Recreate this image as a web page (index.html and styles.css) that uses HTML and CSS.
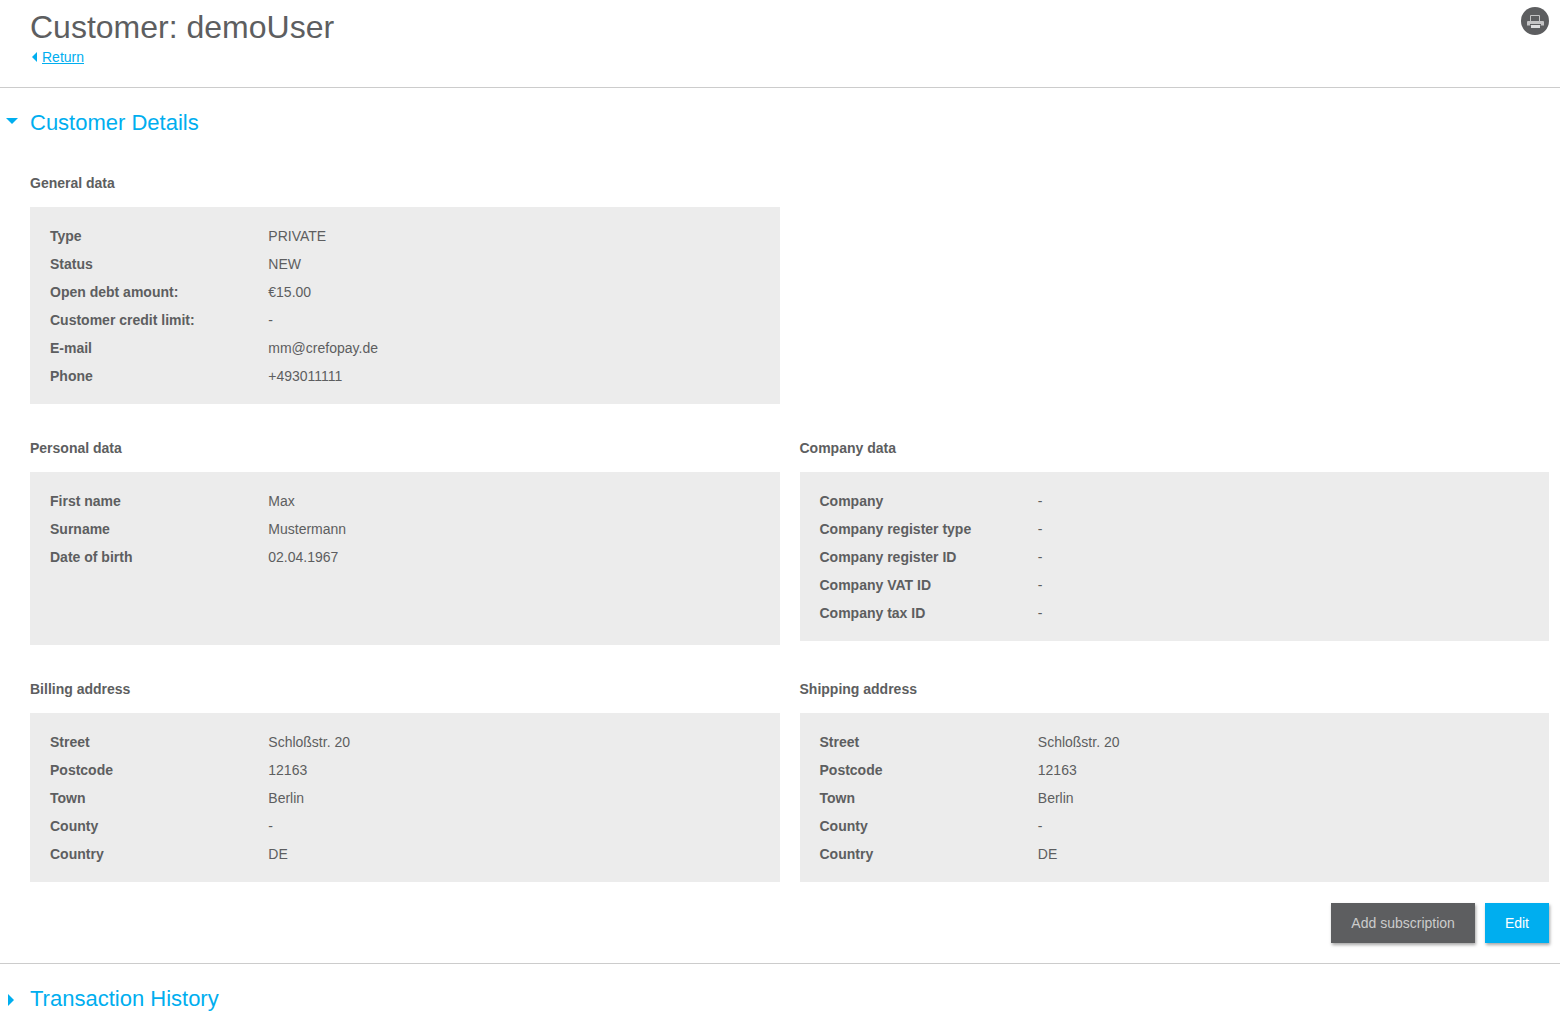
FILE: index.html
```html
<!DOCTYPE html>
<html lang="en">
<head>
<meta charset="utf-8">
<meta name="viewport" content="width=device-width, initial-scale=1">
<title>Customer: demoUser</title>
<link rel="stylesheet" href="styles.css">
</head>
<body>
<header class="page-header">
  <div>
    <h1 class="page-title">Customer: demoUser</h1>
    <div class="return">
      <svg class="return-arrow" width="6" height="10" viewBox="0 0 6 10" aria-hidden="true"><path d="M6 0v10L1 5z"/></svg>
      <a href="#">Return</a>
    </div>
  </div>
  <button class="print" type="button" aria-label="Print">
    <svg width="28" height="28" viewBox="0 0 28 28" aria-hidden="true">
      <circle cx="14" cy="14" r="14" fill="#5d5e60"/>
      <path d="M9.500 14V8.500h9V14" fill="none" stroke="#c4c4c5" stroke-width="1"/>
      <path d="M7 14h15a1 1 0 0 1 1 1v3.500H6V15a1 1 0 0 1 1-1z" fill="#c4c4c5"/>
      <path d="M9 17h11v1.500H9z" fill="#5d5e60"/>
      <path d="M10 18h9v3h-9z" fill="#dededf"/>
    </svg>
  </button>
</header>
<main>
  <details class="section" open>
    <summary class="section-head">
      <svg class="marker" width="12" height="12" viewBox="0 0 12 12" aria-hidden="true"><path d="M0 1h12L6 7z"/></svg>
      <h2 class="section-title">Customer Details</h2>
    </summary>
    <div class="groups">
      <section class="group group-first">
        <h3 class="group-title">General data</h3>
        <dl class="panel">
          <dt>Type</dt><dd>PRIVATE</dd>
          <dt>Status</dt><dd>NEW</dd>
          <dt>Open debt amount:</dt><dd>€15.00</dd>
          <dt>Customer credit limit:</dt><dd>-</dd>
          <dt>E-mail</dt><dd>mm@crefopay.de</dd>
          <dt>Phone</dt><dd>+493011111</dd>
        </dl>
      </section>
      <section class="group">
        <h3 class="group-title">Personal data</h3>
        <dl class="panel panel-personal">
          <dt>First name</dt><dd>Max</dd>
          <dt>Surname</dt><dd>Mustermann</dd>
          <dt>Date of birth</dt><dd>02.04.1967</dd>
        </dl>
      </section>
      <section class="group">
        <h3 class="group-title">Company data</h3>
        <dl class="panel">
          <dt>Company</dt><dd>-</dd>
          <dt>Company register type</dt><dd>-</dd>
          <dt>Company register ID</dt><dd>-</dd>
          <dt>Company VAT ID</dt><dd>-</dd>
          <dt>Company tax ID</dt><dd>-</dd>
        </dl>
      </section>
      <section class="group">
        <h3 class="group-title">Billing address</h3>
        <dl class="panel">
          <dt>Street</dt><dd>Schloßstr. 20</dd>
          <dt>Postcode</dt><dd>12163</dd>
          <dt>Town</dt><dd>Berlin</dd>
          <dt>County</dt><dd>-</dd>
          <dt>Country</dt><dd>DE</dd>
        </dl>
      </section>
      <section class="group">
        <h3 class="group-title">Shipping address</h3>
        <dl class="panel">
          <dt>Street</dt><dd>Schloßstr. 20</dd>
          <dt>Postcode</dt><dd>12163</dd>
          <dt>Town</dt><dd>Berlin</dd>
          <dt>County</dt><dd>-</dd>
          <dt>Country</dt><dd>DE</dd>
        </dl>
      </section>
    </div>
    <div class="actions">
      <button class="button" type="button">Add subscription</button>
      <button class="button button-primary" type="button">Edit</button>
    </div>
  </details>
  <details class="section">
    <summary class="section-head">
      <svg class="marker" width="12" height="12" viewBox="0 0 12 12" aria-hidden="true"><path d="M2 1v12l6-6z"/></svg>
      <h2 class="section-title">Transaction History</h2>
    </summary>
  </details>
</main>
</body>
</html>
```

FILE: styles.css
```css
* {
  box-sizing: border-box;
}

body {
  margin: 0;
  background: #fff;
  color: #5d5e60;
  font: 14px/20px "Liberation Sans", Arial, sans-serif;
}

h1, h2, h3, dl, dd {
  margin: 0;
}

.page-header {
  display: flex;
  justify-content: space-between;
  align-items: flex-start;
  padding: 7px 11px 20px 30px;
  border-bottom: 1px solid #ccc;
}

.page-title {
  font-size: 32px;
  line-height: 40px;
  font-weight: normal;
}

.return {
  display: flex;
  align-items: center;
  gap: 5px;
  padding-left: 1px;
}

.return a {
  color: #00aeef;
}

.return-arrow,
.marker {
  fill: #00aeef;
  overflow: visible;
}

.print {
  display: flex;
  padding: 0;
  border: 0;
  background: none;
  cursor: pointer;
}

.section + .section {
  border-top: 1px solid #ccc;
}

.section-head {
  display: flex;
  align-items: center;
  gap: 12px;
  padding: 19px 6px 0;
  list-style: none;
  cursor: pointer;
}

.section-title {
  color: #00aeef;
  font-size: 22px;
  line-height: 32px;
  font-weight: normal;
}

.groups {
  display: grid;
  grid-template-columns: 1fr 1fr;
  align-items: start;
  gap: 34px 20px;
  padding: 34px 11px 21px 30px;
}

.group-first {
  grid-column: 1;
}

.group-first + .group {
  grid-column: 1;
}

.group-title {
  margin-bottom: 14px;
  font-size: 14px;
  line-height: 20px;
}

.panel {
  display: grid;
  grid-template-columns: 4fr 9fr;
  align-content: start;
  row-gap: 8px;
  padding: 19px 20px 18px;
  background: #ececec;
}

.panel-personal {
  min-height: 173px;
}

.panel dt {
  font-weight: bold;
}

.actions {
  display: flex;
  justify-content: flex-end;
  gap: 10px;
  padding: 0 11px 20px;
}

.button {
  height: 40px;
  padding: 0 20px;
  border: 0;
  background: #5d5e60;
  box-shadow: 1px 2px 3px rgba(0, 0, 0, 0.35);
  color: #ccc;
  font: inherit;
  cursor: pointer;
}

.button-primary {
  background: #00aeef;
  color: #fff;
}
```
